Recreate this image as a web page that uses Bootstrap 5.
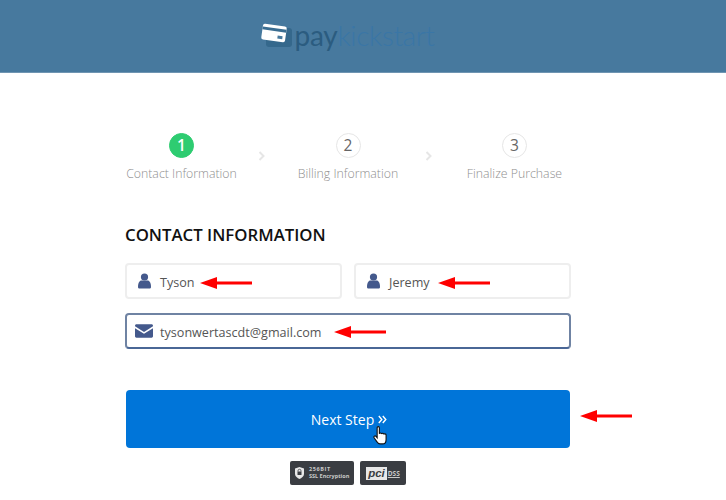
<!DOCTYPE html>
<html lang="en">
  <head>
    <meta charset="UTF-8" />
    <meta name="viewport" content="width=device-width, initial-scale=1.0" />
    <title>Contact Information</title>
    <link href="https://cdn.jsdelivr.net/npm/bootstrap@5.3.3/dist/css/bootstrap.min.css" rel="stylesheet" />
    <style>
      body {
        font-family: "Open Sans", "Noto Sans", sans-serif;
        background: #fff;
        margin: 0;
        overflow: hidden;
      }

      .top-bar {
        height: 73px;
        background: #47799e;
        border-bottom: 1px solid #6f95b2;
      }

      .brand {
        gap: 2px;
        padding: 0 32px 3px 0;
        font-family: "Lato", sans-serif;
        font-size: 28px;
        line-height: 1;
      }

      .brand-pay {
        color: #2b5c80;
        font-weight: 400;
        letter-spacing: -0.3px;
      }

      .brand-kick {
        color: #3a76a6;
        font-weight: 300;
        letter-spacing: -0.4px;
      }

      .page-body {
        width: 446px;
        margin-left: 125px;
      }

      .steps {
        padding-top: 60px;
        display: grid;
        grid-template-columns: repeat(3, 113px);
        justify-content: space-between;
        width: 446px;
      }

      .step-item {
        color: #8f8f8f;
        font-size: 12.3px;
        font-weight: 300;
        white-space: nowrap;
      }

      .step-num {
        width: 25px;
        height: 25px;
        border-radius: 50%;
        border: 1px solid #e6e6e6;
        color: #666;
        font-size: 15.5px;
        font-weight: 400;
        margin-bottom: 7px;
      }

      .step-num.on {
        background: #2ecc71;
        border-color: #2ecc71;
        color: #fff;
        font-weight: 600;
      }

      .step-label {
        line-height: 18px;
      }

      .step-gap {
        position: absolute;
        top: 151px;
      }

      .form-title {
        color: #111;
        font-size: 16.8px;
        font-weight: 600;
        line-height: 22px;
        margin: 41px 0 17px;
      }

      .field-row {
        display: grid;
        grid-template-columns: 217px 217px;
        gap: 12px;
        margin-bottom: 14px;
      }

      .field-box {
        height: 36px;
        border: 2px solid #eeeeee;
        border-radius: 4px;
        color: #555;
        font-size: 12.6px;
        padding: 0 0 0 11px;
        gap: 9px;
      }

      .field-box span {
        padding-top: 5px;
      }

      .field-box svg {
        margin-top: -1px;
      }

      .field-box.active-field {
        border-color: #6f83a3;
        border-bottom-color: #4a6796;
        padding-left: 8px;
        gap: 7px;
      }

      .next-btn {
        display: flex;
        align-items: center;
        justify-content: center;
        gap: 4px;
        width: 444px;
        height: 58px;
        margin: 41px 0 0 1px;
        padding-left: 8px;
        background: #0075d9;
        border: 0;
        border-radius: 4px;
        color: #fff;
        font-size: 14px;
      }

      .badge-row {
        gap: 6px;
        margin-top: 13px;
      }

      .seal {
        height: 24px;
        background: #3a3d42;
        border-radius: 2px;
        color: #c9c9c9;
        font-size: 5.5px;
        font-weight: 700;
        line-height: 7px;
      }

      .seal-ssl {
        width: 64px;
        padding-left: 5px;
        gap: 5px;
      }

      .seal-bits {
        letter-spacing: 0.6px;
      }

      .seal-pci {
        width: 46px;
        gap: 1px;
        justify-content: center;
      }

      .pci-word {
        background: #e8e8e8;
        color: #3a3d42;
        font-family: "Liberation Sans", sans-serif;
        font-size: 11.5px;
        font-style: italic;
        line-height: 13px;
        padding: 0 2px 0 2px;
        text-transform: lowercase;
      }

      .pci-dss {
        font-size: 6.5px;
        text-decoration: underline;
      }

      .mark-arrow {
        position: absolute;
        width: 52px;
        height: 12px;
      }

      .hand-cursor {
        position: absolute;
        left: 373px;
        top: 426px;
      }
    </style>
  </head>
  <body>
    <header class="top-bar d-flex align-items-center justify-content-center">
      <div class="brand d-flex align-items-center">
        <svg width="33" height="26" viewBox="0 0 33 26">
          <rect x="6" y="6" width="26" height="19" rx="3" fill="#35688c" />
          <g transform="rotate(8 14 11)">
            <rect x="2" y="3" width="24" height="16" rx="2" fill="#fff" />
            <rect x="2" y="6" width="24" height="3" fill="#3a6d91" />
            <rect x="18" y="13" width="5" height="3" fill="#47799e" />
          </g>
        </svg>
        <span><span class="brand-pay">pay</span><span class="brand-kick">kickstart</span></span>
      </div>
    </header>

    <main class="page-body">
      <section class="steps text-center">
        <div class="step-item">
          <div class="step-num on d-inline-flex align-items-center justify-content-center">1</div>
          <div class="step-label">Contact Information</div>
        </div>
        <div class="step-item">
          <div class="step-num d-inline-flex align-items-center justify-content-center">2</div>
          <div class="step-label">Billing Information</div>
        </div>
        <div class="step-item">
          <div class="step-num d-inline-flex align-items-center justify-content-center">3</div>
          <div class="step-label">Finalize Purchase</div>
        </div>
      </section>

      <h2 class="form-title">CONTACT INFORMATION</h2>

      <div class="field-row">
        <div class="field-box d-flex align-items-center">
          <svg width="13" height="16" viewBox="0 0 13 16"><circle cx="6.5" cy="4" r="3.6" fill="#44598c" /><path d="M0 14c0-5 2-6.5 3.5-6.5h6C11 7.500 13 9 13 14c0 1-.8 1.600-1.500 1.600h-10C.8 15.600 0 15 0 14z" fill="#44598c" /></svg>
          <span>Tyson</span>
        </div>
        <div class="field-box d-flex align-items-center">
          <svg width="13" height="16" viewBox="0 0 13 16"><circle cx="6.5" cy="4" r="3.600" fill="#44598c" /><path d="M0 14c0-5 2-6.500 3.500-6.500h6C11 7.500 13 9 13 14c0 1-.8 1.600-1.500 1.600h-10C.8 15.600 0 15 0 14z" fill="#44598c" /></svg>
          <span>Jeremy</span>
        </div>
      </div>

      <div class="field-box active-field d-flex align-items-center">
        <svg width="18" height="14" viewBox="0 0 19 14"><path d="M1.500 0h16c.8 0 1.500.7 1.500 1.500v.5L9.500 8 0 2v-.5C0 .7.700 0 1.500 0z" fill="#44598c" /><path d="M0 4l9.500 6L19 4v8.500c0 .8-.7 1.500-1.500 1.500h-16C.7 14 0 13.300 0 12.500z" fill="#44598c" /></svg>
        <span>tysonwertascdt@gmail.com</span>
      </div>

      <button type="button" class="next-btn">
        <span>Next Step</span>
        <svg width="9" height="9" viewBox="0 0 9 9"><path d="M.8 1l3 3.500-3 3.500M4.800 1l3 3.500-3 3.500" fill="none" stroke="#fff" stroke-width="1.400" /></svg>
      </button>

      <div class="badge-row d-flex justify-content-center">
        <div class="seal seal-ssl d-flex align-items-center">
          <svg width="9" height="12" viewBox="0 0 9 12"><path d="M4.500 0L9 1.500V7c0 2.500-2.500 4-4.500 5C2.500 11 0 9.500 0 7V1.500z" fill="#e8e8e8" /><path d="M3 4.500V3.800a1.500 1.500 0 0 1 3 0v.7" fill="none" stroke="#3a3d42" stroke-width=".8" /><rect x="2.500" y="4.500" width="4" height="3.500" fill="#3a3d42" /></svg>
          <div><span class="seal-bits">256BIT</span><br />SSL Encryption</div>
        </div>
        <div class="seal seal-pci d-flex align-items-center">
          <span class="pci-word">PCI</span>
          <span class="pci-dss">DSS</span>
        </div>
      </div>
    </main>

    <!-- step chevrons -->
    <svg class="step-gap" style="left: 258px" width="8" height="10" viewBox="0 0 8 10"><path d="M1.500 1l4 4-4 4" fill="none" stroke="#e6e6e6" stroke-width="2" /></svg>
    <svg class="step-gap" style="left: 425px" width="8" height="10" viewBox="0 0 8 10"><path d="M1.500 1l4 4-4 4" fill="none" stroke="#e6e6e6" stroke-width="2" /></svg>

    <!-- red annotation arrows drawn over the screenshot -->
    <svg class="mark-arrow" style="left: 200px; top: 277px" viewBox="0 0 52 12"><path d="M0 6L17 0V4.500H52V7.500H17V12z" fill="#f00" /></svg>
    <svg class="mark-arrow" style="left: 438px; top: 277px" viewBox="0 0 52 12"><path d="M0 6L17 0V4.500H52V7.500H17V12z" fill="#f00" /></svg>
    <svg class="mark-arrow" style="left: 334px; top: 326px" viewBox="0 0 52 12"><path d="M0 6L17 0V4.500H52V7.500H17V12z" fill="#f00" /></svg>
    <svg class="mark-arrow" style="left: 580px; top: 410px" viewBox="0 0 52 12"><path d="M0 6L17 0V4.500H52V7.500H17V12z" fill="#f00" /></svg>

    <svg class="hand-cursor" width="15" height="19" viewBox="0 0 13 17"><path d="M3.500 1.500c0-1.300 2-1.300 2 0V7c.2-1 2-1 2 .2 .2-1 2-1 2 .3 .3-.8 2-.6 2 .6V12c0 2-1 4-3 4H6c-1.500 0-2.200-1-3-2.200L.8 10.500c-.7-1.200.8-2.200 1.700-1.200l1 1.200z" fill="#fff" stroke="#111" stroke-width="1" /></svg>

    <script src="https://cdn.jsdelivr.net/npm/bootstrap@5.3.3/dist/js/bootstrap.bundle.min.js"></script>
  </body>
</html>
